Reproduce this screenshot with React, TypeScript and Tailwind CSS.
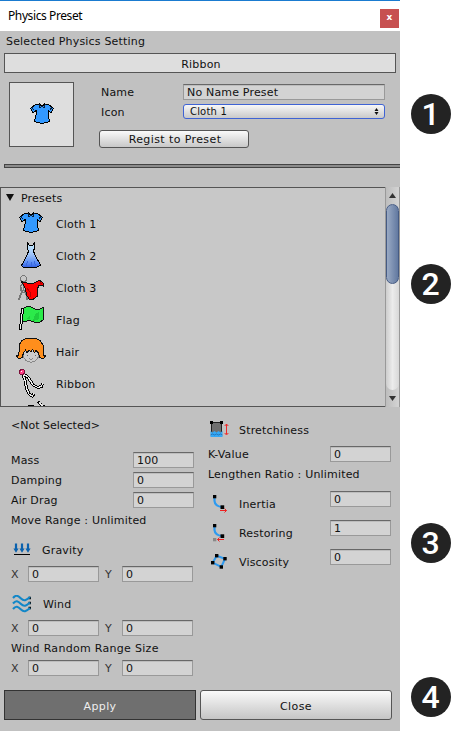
import React from "react";

function Shirt() {
  return (
    <svg className="block h-8 w-8 shrink-0" viewBox="0 0 32 32" shapeRendering="crispEdges">
      <path
        d="M4.5 9.5 9.5 5.5H12L13.5 5 16 7.5 18.5 5 20 5.5H22.5L27.5 9.5 25 13.5 22 11.5V15L23.5 22.5 21 23.5 16 24.3 11 23.5 8.5 22.5 10.3 15V11.5L7 13.5Z"
        fill="#3399ff"
        stroke="#000"
      />
      <path d="M13 5 14 8.5 16 7.5 18 8.5 19.5 5M6 8.5 8.5 11.5M26 8.5 23.5 11.5" fill="none" stroke="#0b1f38" />
    </svg>
  );
}

function Dress() {
  return (
    <svg className="block h-8 w-8 shrink-0" viewBox="0 0 32 32" shapeRendering="crispEdges">
      <defs>
        <linearGradient id="dress" x1="0" y1="0" x2="0" y2="1">
          <stop offset="0" stopColor="#c8efff" />
          <stop offset="0.45" stopColor="#a4c8fa" />
          <stop offset="0.8" stopColor="#5a8cf4" />
          <stop offset="1" stopColor="#2f5be0" />
        </linearGradient>
      </defs>
      <path
        d="M12.5 2.5 13.5 4.5 16 6 18.5 4.5 19.5 2.5V7.5L18.5 11.5 21 17 25.5 25 22 27 19 27.8H12L8 27 6.5 25.5 11 17 13.5 11.5 12.5 7.5Z"
        fill="url(#dress)"
        stroke="#000"
      />
      <path d="M12.5 21 11.5 26M16 22V27M19.5 21 20.5 26" stroke="#3a68dc" fill="none" />
    </svg>
  );
}

function Cape() {
  return (
    <svg className="block h-8 w-8 shrink-0" viewBox="0 0 32 32" shapeRendering="crispEdges">
      <circle cx="8.5" cy="6.5" r="3" fill="none" stroke="#777" />
      <path d="M8.5 10V18M8 11.5 5.5 14 6 18 8 21M8 18 6 22 3.5 28.5M9 18 11.5 23 12.5 28.5" fill="none" stroke="#777" strokeWidth="1.8" />
      <path
        d="M6.5 9.5 12 11 19 11 23 9 25 8.5 28.5 11.5 28.5 14 26 13 23.5 14 22.5 17 22.5 24 20.5 25.5 17.5 28 14.5 27.5 11.5 23 10.5 17Z"
        fill="#ff0000"
        stroke="#111"
      />
      <path d="M12 16 15 20 16 25M25 10 26.5 12" fill="none" stroke="#b80000" />
    </svg>
  );
}

function FlagIcon() {
  return (
    <svg className="block h-8 w-8 shrink-0" viewBox="0 0 32 32" shapeRendering="crispEdges">
      <path
        d="M7.5 5 11 3 15 2.5 20 5 24 5.5 28.5 3.5 28 12 28.5 15.5 24.5 18.5 19 18 14.5 16.5 7.5 18Z"
        fill="#2bea4a"
        stroke="#111"
      />
      <path d="M20 10 24 8V15L18 17ZM11 15 15 11V15Z" fill="#1fce3d" />
      <path d="M6.5 4.5H8.5L6.5 25.5H4.5Z" fill="#eee" stroke="#000" />
    </svg>
  );
}

function HairIcon() {
  return (
    <svg className="block h-8 w-8 shrink-0" viewBox="0 0 32 32" shapeRendering="crispEdges">
      <circle cx="16" cy="18.5" r="7.7" fill="#ccc" stroke="#888" />
      <path d="M12 19V20M20 19V20" stroke="#666" fill="none" />
      <path d="M14 22.5Q16 24.5 18 22.5" stroke="#888" fill="none" />
      <path
        d="M4 16V9L7 4.5 11 2.5H21L25 4.5 28 9V16L28.5 19 30.5 20 28 23 24.5 21.5 23.5 17 21 14.5 19.5 16.5 17.5 13.5 16 15.5 14 14 12 17 10.5 14 8.5 17 7 21.5 4 23 1.5 20 3.5 19Z"
        fill="#ff8e1c"
        stroke="#111"
      />
    </svg>
  );
}

function RibbonIcon() {
  return (
    <svg className="block h-8 w-8 shrink-0" viewBox="0 0 32 32" shapeRendering="crispEdges">
      <path d="M8 6 13 9 18 17 23 19.5 26.5 18.5 27.5 15.5M8 7 10 12 11.5 20 14 26 17.5 28 19 25.5" stroke="#000" strokeWidth="3" fill="none" />
      <path d="M8 6 13 9 18 17 23 19.5 26.5 18.5 27.5 15.5M8 7 10 12 11.5 20 14 26 17.5 28 19 25.5" stroke="#eee" strokeWidth="1.2" fill="none" />
      <circle cx="7" cy="4" r="2.5" fill="#ff3d85" stroke="#7a1038" />
      <rect x="6" y="2.5" width="1" height="1" fill="#fff" />
    </svg>
  );
}

function PartialIcon() {
  return (
    <svg className="block h-8 w-8 shrink-0" viewBox="0 0 32 32" shapeRendering="crispEdges">
      <path d="M23 1.5 29 7" stroke="#000" strokeWidth="3" strokeDasharray="2 1" />
      <path d="M24 2.5 29 7" stroke="#eee" strokeWidth="1.2" />
      <path d="M13 5.5H19" stroke="#000" strokeWidth="1" />
    </svg>
  );
}

function GravityIcon() {
  return (
    <svg className="block h-[14px] w-[20px]" viewBox="0 0 20 14">
      <path d="M4 0.5V7M10 0.5V7M16 0.5V7" stroke="#0b62ae" strokeWidth="2.2" />
      <path d="M1.4 5.5H6.6L4 9.8ZM7.4 5.5H12.6L10 9.8ZM13.4 5.5H18.6L16 9.8Z" fill="#0b62ae" />
      <path d="M2 11.5H18" stroke="#000" />
    </svg>
  );
}

function WindIcon() {
  return (
    <svg className="block h-[18px] w-[20px]" viewBox="0 0 20 18">
      <path d="M16.5 3H19M16.5 8H19M16.5 13H19" stroke="#111" strokeWidth="2.4" />
      <g fill="none" stroke="#1287c8" strokeWidth="2.1">
        <path d="M1 3C4 -.5 6 .5 9 3.5S14 5.5 18 2" />
        <path d="M1 8.5C4 5 6 6 9 9S14 11 18 7.5" />
        <path d="M1 14C4 10.5 6 11.5 9 14.5S14 16.5 18 13" />
      </g>
    </svg>
  );
}

function StretchIcon() {
  return (
    <svg className="block h-[20px] w-[20px]" viewBox="0 0 20 20">
      <rect x="2" y="2" width="11" height="11" fill="#707070" />
      <path d="M2.5 3V12M12.5 3V12M2 2.5H13" stroke="#222" fill="none" />
      <rect x="1" y="1" width="3" height="3" />
      <rect x="11" y="1" width="3" height="3" />
      <path d="M1.5 11 3.5 12.5 5.5 11 7.5 12.5 9.5 11 11.5 12.5 13.5 11V17H1.5Z" fill="#35a8f5" />
      <path d="M1.5 15 3.5 14 5.5 15 7.5 14 9.5 15 11.5 14 13.5 15" stroke="#1a5c9c" strokeWidth=".6" fill="none" />
      <path d="M17.5 4V14M15.7 6 17.5 4 19.3 6M15.7 13 17.5 15 19.3 13" stroke="#ef2929" fill="none" />
    </svg>
  );
}

function InertiaIcon() {
  return (
    <svg className="block h-[20px] w-[20px]" viewBox="0 0 20 20">
      <path d="M5.5 4V7Q6 12 12.5 13" stroke="#2d9af0" strokeWidth="2.2" fill="none" />
      <rect x="4" y="1" width="3.3" height="3.3" />
      <rect x="11.5" y="11.3" width="3.7" height="3.7" />
      <path d="M11 16.5H17.5M15.5 14.5 17.5 16.5 15.5 18.5" stroke="#ef2020" fill="none" />
    </svg>
  );
}

function RestoreIcon() {
  return (
    <svg className="block h-[20px] w-[20px]" viewBox="0 0 20 20">
      <path d="M5.5 4V7Q6 12 12.5 13" stroke="#2d9af0" strokeWidth="2.2" fill="none" />
      <rect x="4" y="1" width="3.3" height="3.3" />
      <rect x="11.5" y="11.3" width="3.7" height="3.7" />
      <rect x="4" y="15" width="3.3" height="3.3" fill="#888" />
      <path d="M15 16.5H8.5M10.5 14.5 8.5 16.5 10.5 18.5" stroke="#ef2020" fill="none" />
    </svg>
  );
}

function ViscosityIcon() {
  return (
    <svg className="block h-[20px] w-[20px]" viewBox="0 0 20 20">
      <path d="M7.7 3.7 16 6.7 12.3 15 3.7 10.7Z" fill="none" stroke="#2d9af0" strokeWidth="2" />
      <rect x="6" y="2" width="3.4" height="3.4" />
      <rect x="14.3" y="5" width="3.4" height="3.4" />
      <rect x="2" y="9" width="3.4" height="3.4" />
      <rect x="10.6" y="13.3" width="3.4" height="3.4" />
    </svg>
  );
}

function Field({ value, className }: { value: string; className: string }) {
  return (
    <div
      className={`flex h-4 shrink-0 items-center border border-[#999] border-t-[#686868] bg-[#d3d3d3] pt-[2px] pl-[3px] shadow-[inset_0_1px_0_#bdbdbd] ${className}`}
    >
      {value}
    </div>
  );
}

function XY() {
  return (
    <div className="flex h-4 items-center pl-[11px]">
      <span className="w-[17px] pt-[2px] text-[#333]">X</span>
      <Field value="0" className="w-[71px]" />
      <span className="w-[23px] pt-[2px] pl-[6px] text-[#333]">Y</span>
      <Field value="0" className="w-[71px]" />
    </div>
  );
}

function NumberRow({ label, value }: { label: string; value: string }) {
  return (
    <div className="flex h-4 items-center pl-[11px]">
      <span className="w-[122px] pt-[2px]">{label}</span>
      <Field value={value} className="w-[61px]" />
    </div>
  );
}

function ForceRow({ icon, label, value }: { icon: React.ReactNode; label: string; value: string }) {
  return (
    <div className="flex h-[29px] items-start">
      <div className="w-[31px] pt-[3px] pl-[1px]">{icon}</div>
      <span className="w-[91px] pt-[7px] leading-[14px]">{label}</span>
      <Field value={value} className="w-[61px]" />
    </div>
  );
}

function Badge({ n }: { n: string }) {
  return (
    <div className="flex h-10 w-10 items-center justify-center rounded-full bg-[#232323] font-[Roboto,sans-serif] text-[32px] leading-none font-medium tracking-normal text-white">
      {n}
    </div>
  );
}

const presets = [
  { label: "Cloth 1", icon: <Shirt /> },
  { label: "Cloth 2", icon: <Dress /> },
  { label: "Cloth 3", icon: <Cape /> },
  { label: "Flag", icon: <FlagIcon /> },
  { label: "Hair", icon: <HairIcon /> },
  { label: "Ribbon", icon: <RibbonIcon /> },
  { label: "", icon: <PartialIcon /> },
];

export default function App() {
  return (
    <div className="flex h-[731px] w-[467px] overflow-hidden bg-white font-['DejaVu_Sans',Verdana,sans-serif] text-[11px] leading-[14px] tracking-[0.18px] whitespace-nowrap text-[#111]">
      <main className="flex h-full w-[400px] shrink-0 flex-col bg-[#c1c1c1]">
        <header className="flex h-[31px] shrink-0 items-center justify-between border-t border-[#1a7bd0] bg-white pr-px pl-2">
          <span className="font-['Noto_Sans',sans-serif] text-[12px] tracking-[-0.4px] text-black">Physics Preset</span>
          <button className="mt-[4px] flex h-[19px] w-[19px] items-center justify-center bg-[#c75050] pb-[2px] text-[9px] font-bold tracking-normal text-white">
            x
          </button>
        </header>

        <section className="flex h-[133px] shrink-0 flex-col">
          <div className="flex h-[22px] items-center pl-[6px]">Selected Physics Setting</div>
          <div className="mx-1 flex h-5 items-center justify-center border border-[#555] bg-[#dedede] pt-[4px] pl-[2px]">Ribbon</div>
          <div className="flex pt-[9px] pl-[9px]">
            <div className="flex h-[65px] w-[65px] items-center justify-center border border-[#555] bg-[#dedede] pt-[1px]">
              <Shirt />
            </div>
            <div className="flex flex-col pt-[2px] pl-[25px]">
              <div className="flex h-4 items-center">
                <span className="w-[84px] pt-[2px] pl-[2px]">Name</span>
                <Field value="No Name Preset" className="w-[202px]" />
              </div>
              <div className="mt-[4px] flex h-[15px] items-center">
                <span className="w-[84px] pt-[2px] pl-[2px]">Icon</span>
                <div className="flex h-[15px] w-[202px] items-center justify-between rounded-[3px] border border-[#3f63d4] bg-linear-to-b from-[#f8f8f8] to-[#c9c9c9] pr-[5px] pl-[6px] text-[10px]">
                  <span>Cloth 1</span>
                  <svg className="block h-[7px] w-[5px]" viewBox="0 0 5 7">
                    <path d="M.5 3 2.5 0 4.5 3ZM.5 4 2.5 7 4.5 4Z" fill="#111" />
                  </svg>
                </div>
              </div>
              <button className="mt-[11px] flex h-[18px] w-[150px] items-center justify-center rounded-[3px] border border-[#555] bg-linear-to-b from-[#fafafa] to-[#c8c8c8] pt-[2px] pl-[2px] tracking-[0.4px]">
                Regist to Preset
              </button>
            </div>
          </div>
        </section>

        <div className="ml-1 h-1 shrink-0 border-y border-l border-[#444] bg-[#8c8c8c]" />

        <section className="mt-[19px] flex h-[220px] shrink-0">
          <div className="w-[385px] overflow-hidden border-y border-l border-[#555] bg-[#c8c8c8]">
            <div className="flex h-5 items-center pl-[5px]">
              <svg className="mb-[2px] block h-[7px] w-[8px]" viewBox="0 0 8 7">
                <path d="M0 0H8L4 7Z" fill="#111" />
              </svg>
              <span className="pt-[2px] pl-[7px]">Presets</span>
            </div>
            {presets.map((p, i) => (
              <div key={i} className="flex h-8 items-center pl-[14px]">
                {p.icon}
                <span className="pt-[2px] pl-[9px]">{p.label}</span>
              </div>
            ))}
          </div>
          <div className="flex w-[15px] flex-col items-center border-x border-[#999] bg-linear-to-r from-[#bdbdbd] to-[#d4d4d4]">
            <svg className="block h-[17px] w-[7px] shrink-0" viewBox="0 0 7 17">
              <path d="M0 11 3.5 6 7 11Z" fill="#333" />
            </svg>
            <div className="h-[186px] w-[13px] rounded-full bg-linear-to-r from-[#cdcdcd] via-[#ececec] to-[#d8d8d8]">
              <div className="h-[80px] w-[13px] rounded-full border border-[#465b83] bg-linear-to-r from-[#9aaac4] to-[#6279a0]" />
            </div>
            <svg className="block h-[17px] w-[7px] shrink-0" viewBox="0 0 7 17">
              <path d="M0 6 3.5 11 7 6Z" fill="#333" />
            </svg>
          </div>
        </section>

        <section className="flex h-[283px] shrink-0">
          <div className="flex w-[208px] flex-col">
            <div className="flex h-[45px] pt-[12px] pl-[11px] tracking-[0px]">&lt;Not Selected&gt;</div>
            <div className="flex flex-col gap-1">
              <NumberRow label="Mass" value="100" />
              <NumberRow label="Damping" value="0" />
              <NumberRow label="Air Drag" value="0" />
            </div>
            <div className="flex h-6 items-center pt-[2px] pl-[11px]">Move Range : Unlimited</div>
            <div className="flex h-[34px] items-center pt-[2px] pl-[12px]">
              <GravityIcon />
              <span className="pt-[2px] pl-[10px]">Gravity</span>
            </div>
            <XY />
            <div className="flex h-[38px] items-center pt-[6px] pl-[12px]">
              <WindIcon />
              <span className="pt-[2px] pl-[11px]">Wind</span>
            </div>
            <XY />
            <div className="flex h-6 items-center pt-[2px] pl-[11px] tracking-[0.3px]">Wind Random Range Size</div>
            <XY />
          </div>
          <div className="flex flex-1 flex-col">
            <div className="flex h-[39px] items-center pt-[7px] pl-[1px]">
              <StretchIcon />
              <span className="pt-[1px] pl-[10px]">Stretchiness</span>
            </div>
            <div className="flex h-4 items-center">
              <span className="w-[122px] pt-[2px]">K-Value</span>
              <Field value="0" className="w-[61px]" />
            </div>
            <div className="mb-[5px] flex h-6 items-center pt-[2px]">Lengthen Ratio : Unlimited</div>
            <ForceRow icon={<InertiaIcon />} label="Inertia" value="0" />
            <ForceRow icon={<RestoreIcon />} label="Restoring" value="1" />
            <ForceRow icon={<ViscosityIcon />} label="Viscosity" value="0" />
          </div>
        </section>

        <footer className="flex gap-1 pl-1 tracking-[0.4px]">
          <button className="flex h-[30px] w-[192px] items-center justify-center border border-[#333] bg-[#6f6f6f] pt-[4px] text-[#eee]">
            Apply
          </button>
          <button className="flex h-[30px] w-[192px] items-center justify-center rounded-[3px] border border-[#555] bg-linear-to-b from-[#fafafa] to-[#c5c5c5] pt-[4px]">
            Close
          </button>
        </footer>
      </main>

      <aside className="flex flex-col pt-[94px] pl-[10.5px]">
        <Badge n="1" />
        <div className="mt-[130px]">
          <Badge n="2" />
        </div>
        <div className="mt-[219px]">
          <Badge n="3" />
        </div>
        <div className="mt-[114px]">
          <Badge n="4" />
        </div>
      </aside>
    </div>
  );
}
